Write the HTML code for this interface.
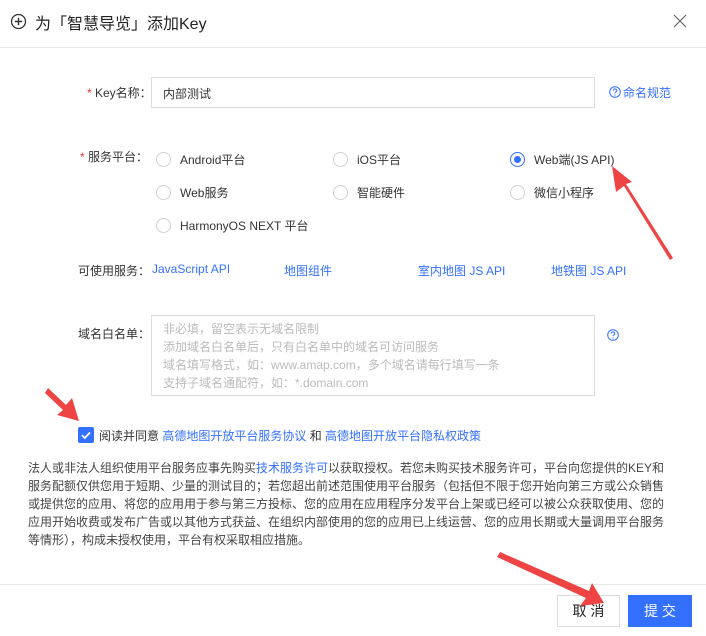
<!DOCTYPE html>
<html><head><meta charset="utf-8"><style>
*{margin:0;padding:0;box-sizing:border-box}
body{width:706px;height:636px;background:#fff;font-family:"Liberation Sans","Noto Sans CJK SC",sans-serif;font-size:12px;color:#333;position:relative;overflow:hidden}
.a{position:absolute;white-space:nowrap}
.blue{color:#3370ff}
.radio{position:absolute;width:15px;height:15px;border:1px solid #d0d0d0;border-radius:50%}
.star{color:#e33}
</style></head><body>
<svg class="a" style="left:10px;top:13px" width="17" height="17" viewBox="0 0 17 17"><circle cx="8.5" cy="8.5" r="7" fill="none" stroke="#333" stroke-width="1.3"/><path d="M8.5 4.8v7.4M4.8 8.5h7.4" stroke="#333" stroke-width="1.4"/></svg>
<div class="a" style="left:35px;top:10px;font-size:16px;color:#222">为「智慧导览」添加Key</div>
<svg class="a" style="left:673px;top:14px" width="14" height="14" viewBox="0 0 14 14"><path d="M1 1L13 13M13 1L1 13" stroke="#666" stroke-width="1.2"/></svg>
<div class="a" style="left:0;top:47px;width:706px;height:1px;background:#e8e8e8"></div>

<div class="a" style="left:87px;top:84px"><span class="star">*</span> Key名称：</div>
<div class="a" style="left:151px;top:77px;width:444px;height:31px;border:1px solid #dcdcdc;padding:7px 11px">内部测试</div>
<svg class="a" style="left:609px;top:86px" width="12" height="12" viewBox="0 0 12 12"><circle cx="6" cy="6" r="5.3" fill="none" stroke="#3370ff"/><path d="M4.3 4.6a1.7 1.7 0 1 1 2.4 1.5c-.5.3-.7.6-.7 1.2" fill="none" stroke="#3370ff"/><circle cx="6" cy="9" r=".6" fill="#3370ff"/></svg>
<div class="a blue" style="left:623px;top:84px">命名规范</div>

<div class="a" style="left:80px;top:148px"><span class="star">*</span> 服务平台：</div>
<div class="radio" style="left:156px;top:152px"></div><div class="a" style="left:180px;top:151px">Android平台</div>
<div class="radio" style="left:333px;top:152px"></div><div class="a" style="left:357px;top:151px">iOS平台</div>
<div class="radio" style="left:510px;top:152px;border-color:#3370ff"><div style="position:absolute;left:3px;top:3px;width:7px;height:7px;border-radius:50%;background:#3370ff"></div></div><div class="a" style="left:534px;top:151px">Web端(JS API)</div>
<div class="radio" style="left:156px;top:185px"></div><div class="a" style="left:180px;top:184px">Web服务</div>
<div class="radio" style="left:333px;top:185px"></div><div class="a" style="left:357px;top:184px">智能硬件</div>
<div class="radio" style="left:510px;top:185px"></div><div class="a" style="left:534px;top:184px">微信小程序</div>
<div class="radio" style="left:156px;top:218px"></div><div class="a" style="left:180px;top:217px">HarmonyOS NEXT 平台</div>

<div class="a" style="left:78px;top:262px">可使用服务：</div>
<div class="a blue" style="left:152px;top:262px">JavaScript API</div>
<div class="a blue" style="left:284px;top:262px">地图组件</div>
<div class="a blue" style="left:418px;top:262px">室内地图 JS API</div>
<div class="a blue" style="left:551px;top:262px">地铁图 JS API</div>

<div class="a" style="left:78px;top:325px">域名白名单：</div>
<div class="a" style="left:151px;top:315px;width:444px;height:81px;border:1px solid #dcdcdc;padding:4px 11px;color:#bbb;line-height:18px">非必填，留空表示无域名限制<br>添加域名白名单后，只有白名单中的域名可访问服务<br>域名填写格式，如：www.amap.com，多个域名请每行填写一条<br>支持子域名通配符，如：*.domain.com</div>
<svg class="a" style="left:607px;top:329px" width="12" height="12" viewBox="0 0 12 12"><circle cx="6" cy="6" r="5.3" fill="none" stroke="#3370ff"/><path d="M4.3 4.6a1.7 1.7 0 1 1 2.4 1.5c-.5.3-.7.6-.7 1.2" fill="none" stroke="#3370ff"/><circle cx="6" cy="9" r=".6" fill="#3370ff"/></svg>

<div class="a" style="left:78px;top:427px;width:16px;height:16px;background:#3370ff;border-radius:2px"><svg width="16" height="16"><path d="M4 8.2l2.8 2.8L12 5.5" fill="none" stroke="#fff" stroke-width="1.8"/></svg></div>
<div class="a" style="left:99px;top:427px">阅读并同意 <span class="blue">高德地图开放平台服务协议</span> 和 <span class="blue">高德地图开放平台隐私权政策</span></div>

<div class="a" style="left:28px;top:459px;width:640px;white-space:normal;line-height:18px;color:#444">法人或非法人组织使用平台服务应事先购买<span class="blue">技术服务许可</span>以获取授权。若您未购买技术服务许可，平台向您提供的KEY和服务配额仅供您用于短期、少量的测试目的；若您超出前述范围使用平台服务（包括但不限于您开始向第三方或公众销售或提供您的应用、将您的应用用于参与第三方投标、您的应用在应用程序分发平台上架或已经可以被公众获取使用、您的应用开始收费或发布广告或以其他方式获益、在组织内部使用的您的应用已上线运营、您的应用长期或大量调用平台服务等情形），构成未授权使用，平台有权采取相应措施。</div>

<div class="a" style="left:0;top:584px;width:706px;height:1px;background:#e8e8e8"></div>
<div class="a" style="left:557px;top:595px;width:63px;height:32px;border:1px solid #dcdcdc;text-align:center;line-height:30px;font-size:14px;color:#222">取 消</div>
<div class="a" style="left:628px;top:595px;width:64px;height:32px;background:#3370ff;color:#fff;text-align:center;line-height:32px;font-size:14px">提 交</div>

<svg class="a" style="left:0;top:0" width="706" height="636">
<g fill="#ef4444">
<polygon points="673,258 670,260 624,186 616,192 612,166 632,182 626,184"/>
<polygon points="45,393 48,388 66,405 72,398 79,421 57,415 63,410"/>
<polygon points="497,557 500,552 589,591 592,583 604,603 580,606 586,598"/>
</g>
</svg>
</body></html>
